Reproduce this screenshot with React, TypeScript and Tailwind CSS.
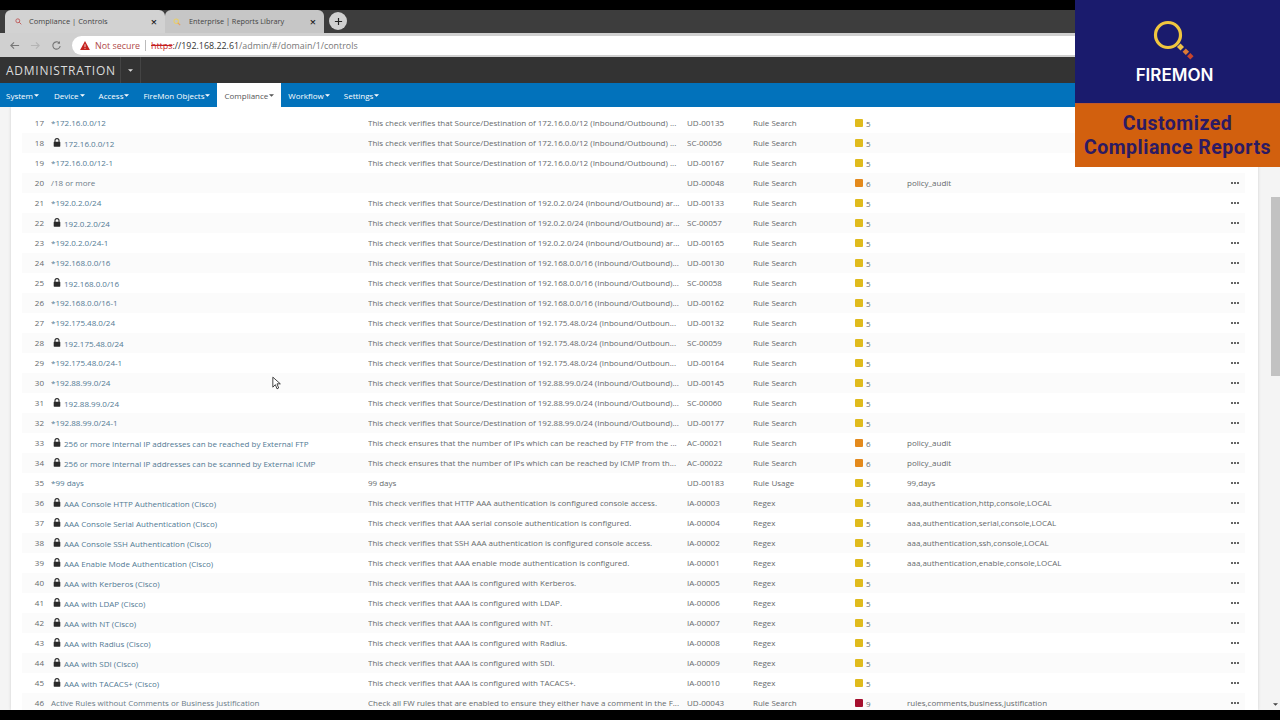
import React from "react";

type Row = { n: number; lock?: boolean; name: string; desc: string; id: string; type: string; sev: number; tags?: string };

const src = (ip: string, tail: string) => `This check verifies that Source/Destination of ${ip} (Inbound/Outbound)${tail}`;

const rows: Row[] = [
  { n: 17, name: "*172.16.0.0/12", desc: src("172.16.0.0/12", " ..."), id: "UD-00135", type: "Rule Search", sev: 5 },
  { n: 18, lock: true, name: "172.16.0.0/12", desc: src("172.16.0.0/12", " ..."), id: "SC-00056", type: "Rule Search", sev: 5 },
  { n: 19, name: "*172.16.0.0/12-1", desc: src("172.16.0.0/12", " ..."), id: "UD-00167", type: "Rule Search", sev: 5 },
  { n: 20, name: "/18 or more", desc: "", id: "UD-00048", type: "Rule Search", sev: 6, tags: "policy_audit" },
  { n: 21, name: "*192.0.2.0/24", desc: src("192.0.2.0/24", " ar..."), id: "UD-00133", type: "Rule Search", sev: 5 },
  { n: 22, lock: true, name: "192.0.2.0/24", desc: src("192.0.2.0/24", " ar..."), id: "SC-00057", type: "Rule Search", sev: 5 },
  { n: 23, name: "*192.0.2.0/24-1", desc: src("192.0.2.0/24", " ar..."), id: "UD-00165", type: "Rule Search", sev: 5 },
  { n: 24, name: "*192.168.0.0/16", desc: src("192.168.0.0/16", "..."), id: "UD-00130", type: "Rule Search", sev: 5 },
  { n: 25, lock: true, name: "192.168.0.0/16", desc: src("192.168.0.0/16", "..."), id: "SC-00058", type: "Rule Search", sev: 5 },
  { n: 26, name: "*192.168.0.0/16-1", desc: src("192.168.0.0/16", "..."), id: "UD-00162", type: "Rule Search", sev: 5 },
  { n: 27, name: "*192.175.48.0/24", desc: "This check verifies that Source/Destination of 192.175.48.0/24 (Inbound/Outboun...", id: "UD-00132", type: "Rule Search", sev: 5 },
  { n: 28, lock: true, name: "192.175.48.0/24", desc: "This check verifies that Source/Destination of 192.175.48.0/24 (Inbound/Outboun...", id: "SC-00059", type: "Rule Search", sev: 5 },
  { n: 29, name: "*192.175.48.0/24-1", desc: "This check verifies that Source/Destination of 192.175.48.0/24 (Inbound/Outboun...", id: "UD-00164", type: "Rule Search", sev: 5 },
  { n: 30, name: "*192.88.99.0/24", desc: src("192.88.99.0/24", "..."), id: "UD-00145", type: "Rule Search", sev: 5 },
  { n: 31, lock: true, name: "192.88.99.0/24", desc: src("192.88.99.0/24", "..."), id: "SC-00060", type: "Rule Search", sev: 5 },
  { n: 32, name: "*192.88.99.0/24-1", desc: src("192.88.99.0/24", "..."), id: "UD-00177", type: "Rule Search", sev: 5 },
  { n: 33, lock: true, name: "256 or more Internal IP addresses can be reached by External FTP", desc: "This check ensures that the number of IPs which can be reached by FTP from the ...", id: "AC-00021", type: "Rule Search", sev: 6, tags: "policy_audit" },
  { n: 34, lock: true, name: "256 or more Internal IP addresses can be scanned by External ICMP", desc: "This check ensures that the number of IPs which can be reached by ICMP from th...", id: "AC-00022", type: "Rule Search", sev: 6, tags: "policy_audit" },
  { n: 35, name: "*99 days", desc: "99 days", id: "UD-00183", type: "Rule Usage", sev: 5, tags: "99,days" },
  { n: 36, lock: true, name: "AAA Console HTTP Authentication (Cisco)", desc: "This check verifies that HTTP AAA authentication is configured console access.", id: "IA-00003", type: "Regex", sev: 5, tags: "aaa,authentication,http,console,LOCAL" },
  { n: 37, lock: true, name: "AAA Console Serial Authentication (Cisco)", desc: "This check verifies that AAA serial console authentication is configured.", id: "IA-00004", type: "Regex", sev: 5, tags: "aaa,authentication,serial,console,LOCAL" },
  { n: 38, lock: true, name: "AAA Console SSH Authentication (Cisco)", desc: "This check verifies that SSH AAA authentication is configured console access.", id: "IA-00002", type: "Regex", sev: 5, tags: "aaa,authentication,ssh,console,LOCAL" },
  { n: 39, lock: true, name: "AAA Enable Mode Authentication (Cisco)", desc: "This check verifies that AAA enable mode authentication is configured.", id: "IA-00001", type: "Regex", sev: 5, tags: "aaa,authentication,enable,console,LOCAL" },
  { n: 40, lock: true, name: "AAA with Kerberos (Cisco)", desc: "This check verifies that AAA is configured with Kerberos.", id: "IA-00005", type: "Regex", sev: 5 },
  { n: 41, lock: true, name: "AAA with LDAP (Cisco)", desc: "This check verifies that AAA is configured with LDAP.", id: "IA-00006", type: "Regex", sev: 5 },
  { n: 42, lock: true, name: "AAA with NT (Cisco)", desc: "This check verifies that AAA is configured with NT.", id: "IA-00007", type: "Regex", sev: 5 },
  { n: 43, lock: true, name: "AAA with Radius (Cisco)", desc: "This check verifies that AAA is configured with Radius.", id: "IA-00008", type: "Regex", sev: 5 },
  { n: 44, lock: true, name: "AAA with SDI (Cisco)", desc: "This check verifies that AAA is configured with SDI.", id: "IA-00009", type: "Regex", sev: 5 },
  { n: 45, lock: true, name: "AAA with TACACS+ (Cisco)", desc: "This check verifies that AAA is configured with TACACS+.", id: "IA-00010", type: "Regex", sev: 5 },
  { n: 46, name: "Active Rules without Comments or Business Justification", desc: "Check all FW rules that are enabled to ensure they either have a comment in the F...", id: "UD-00043", type: "Rule Search", sev: 9, tags: "rules,comments,business,justification" },
];

const Caret = ({ className = "" }: { className?: string }) => (
  <svg viewBox="0 0 6 3" className={`inline-block w-[5px] h-[3px] ${className}`}>
    <path d="M0 0h6L3 3z" fill="currentColor" />
  </svg>
);

const Lock = () => (
  <svg viewBox="0 0 8 9" className="w-[8px] h-[9px] shrink-0 -mt-[1px] text-[#2b2b2b]">
    <path d="M2 4V2.6a2 2 0 0 1 4 0V4" fill="none" stroke="currentColor" strokeWidth="1.1" />
    <rect x="0.7" y="3.8" width="6.6" height="4.9" rx="0.6" fill="currentColor" />
  </svg>
);

const Dots = () => (
  <div className="flex gap-[1px] items-center">
    <span className="w-[2px] h-[2px] rounded-full bg-[#333]" />
    <span className="w-[2px] h-[2px] rounded-full bg-[#333]" />
    <span className="w-[2px] h-[2px] rounded-full bg-[#333]" />
  </div>
);

const TableRow = ({ r, i }: { r: Row; i: number }) => {
  const sevColor = r.sev === 5 ? "bg-[#e0bb1d]" : r.sev === 6 ? "bg-[#e48a1c]" : "bg-[#a50f2d]";
  return (
    <div className={`flex h-[20px] shrink-0 items-center whitespace-nowrap text-[8px] text-[#666a6c] ${i % 2 === 1 ? "bg-[#fbfbfb]" : ""}`}>
      <div className="w-[22px] text-right shrink-0">{r.n}</div>
      <div className="w-[324px] pl-[7px] shrink-0 flex items-center text-[#527a94] overflow-hidden">
        {r.lock ? (
          <>
            <span className="ml-[2px] mr-[3px] flex"><Lock /></span>
            <span className="mt-[1px]">{r.name}</span>
          </>
        ) : (
          <span className={r.n === 20 || r.n === 46 ? "text-[#6b7c88]" : ""}>{r.name}</span>
        )}
      </div>
      <div className="w-[319px] shrink-0 overflow-hidden">{r.desc}</div>
      <div className="w-[66px] shrink-0">{r.id}</div>
      <div className="w-[102px] shrink-0">{r.type}</div>
      <div className="w-[52px] shrink-0 flex items-center">
        <span className={`w-[8px] h-[8px] -mt-[1px] rounded-[1px] ${sevColor}`} />
        <span className="ml-[3px] mt-[1px]">{r.sev}</span>
      </div>
      <div className="flex-1 min-w-0">{r.tags}</div>
      <div className="w-[14px] shrink-0 flex -mt-[1px]"><Dots /></div>
    </div>
  );
};

const nav = ["System", "Device", "Access", "FireMon Objects", "Compliance", "Workflow", "Settings"];

export default function App() {
  return (
    <div className="relative w-[1280px] h-[720px] overflow-hidden bg-black flex flex-col font-['Open_Sans',sans-serif]">
      {/* black letterbox top */}
      <div className="h-[10px] shrink-0 bg-black" />

      {/* tab strip */}
      <div className="h-[23px] shrink-0 bg-[#3d3d3d] flex items-end pl-[5px]">
        <div className="w-[160px] h-[23px] bg-[#d2d2d2] rounded-t-[6px] flex items-center pl-[10px] pr-[8px] text-[7.5px] text-[#444]">
          <svg viewBox="0 0 10 10" className="w-[7px] h-[7px] mr-[7px] text-[#c06060]">
            <circle cx="4" cy="4" r="2.8" fill="none" stroke="currentColor" strokeWidth="1.4" />
            <path d="M6 6l3 3" stroke="currentColor" strokeWidth="1.4" />
          </svg>
          <span className="flex-1">Compliance | Controls</span>
          <span className="text-[#222] text-[11px] font-semibold leading-none">×</span>
        </div>
        <div className="w-[159px] h-[23px] bg-[#c6c6c6] rounded-t-[6px] flex items-center pl-[8px] pr-[8px] text-[7.3px] text-[#444]">
          <svg viewBox="0 0 10 10" className="w-[8px] h-[8px] mr-[8px] text-[#e8cf6a]">
            <circle cx="4" cy="4" r="2.8" fill="none" stroke="currentColor" strokeWidth="1.4" />
            <path d="M6 6l3 3" stroke="#e8a060" strokeWidth="1.4" />
          </svg>
          <span className="flex-1">Enterprise | Reports Library</span>
          <span className="text-[#222] text-[11px] font-semibold leading-none">×</span>
        </div>
        <div className="ml-[5px] mb-[3px] w-[18px] h-[18px] rounded-full bg-[#d0d0d0] flex items-center justify-center">
          <svg viewBox="0 0 10 10" className="w-[9px] h-[9px] text-[#222]">
            <path d="M5 1v8M1 5h8" stroke="currentColor" strokeWidth="1.3" />
          </svg>
        </div>
      </div>

      {/* address bar */}
      <div className="h-[24px] shrink-0 bg-[#d0d0d0] flex items-center pl-[9px]">
        <svg viewBox="0 0 12 12" className="w-[11px] h-[11px] text-[#777]">
          <path d="M11 6H2M5.5 2.5L2 6l3.5 3.5" fill="none" stroke="currentColor" strokeWidth="1.2" />
        </svg>
        <svg viewBox="0 0 12 12" className="w-[11px] h-[11px] ml-[10px] text-[#b4b4b4]">
          <path d="M1 6h9M6.5 2.5L10 6 6.5 9.5" fill="none" stroke="currentColor" strokeWidth="1.2" />
        </svg>
        <svg viewBox="0 0 12 12" className="w-[11px] h-[11px] ml-[10px] text-[#777]">
          <path d="M10 6.5A4 4 0 1 1 9 3.3" fill="none" stroke="currentColor" strokeWidth="1.2" />
          <path d="M9.8 1v3H6.8z" fill="currentColor" />
        </svg>
        <div className="ml-[10px] flex-1 h-[19px] bg-white rounded-l-full flex items-center pl-[8px] pt-[1px] text-[8.9px]">
          <svg viewBox="0 0 12 11" className="w-[10px] h-[9px] text-[#c5221f]">
            <path d="M6 0l6 11H0z" fill="currentColor" />
            <path d="M6 4v3.5M6 8.5v1" stroke="#fff" strokeWidth="1" />
          </svg>
          <span className="ml-[5px] text-[#b04a48]">Not secure</span>
          <span className="mx-[5px] w-[1px] h-[11px] bg-[#bbb]" />
          <span className="text-[#c5221f] line-through">https</span>
          <span className="text-[#333]">://192.168.22.61</span>
          <span className="text-[#777]">/admin/#/domain/1/controls</span>
        </div>
      </div>

      {/* admin bar */}
      <div className="h-[26px] shrink-0 bg-[#333333] flex items-stretch">
        <div className="w-[121px] pl-[6px] pt-[1px] flex items-center text-[12px] tracking-[0.75px] text-[#dcdcdc] border-r border-[#444]">ADMINISTRATION</div>
        <div className="w-[20px] flex items-center justify-center text-[#ddd] border-r border-[#444]"><Caret /></div>
      </div>

      {/* nav */}
      <div className="h-[24px] shrink-0 bg-[#0272bb] flex items-stretch pl-[6px] text-[8px] text-white">
        {nav.map((n) => {
          const active = n === "Compliance";
          const cls = active
            ? "bg-white text-[#555] px-[7px] ml-[-7px] mr-[7px]"
            : "mr-[14px] first:mr-[15px] last:mr-0";
          return (
            <div key={n} className={`flex items-center pt-[1px] ${cls}`}>
              {n}
              <Caret className="ml-[1px]" />
            </div>
          );
        })}
      </div>

      {/* content */}
      <div className="h-[603px] shrink-0 bg-[#f4f4f4] flex overflow-hidden">
        <div className="ml-[11px] w-[1247px] h-full bg-white shadow-[0_0_3px_rgba(0,0,0,0.15)] pt-[6px] pl-[11px] pr-[13px] flex flex-col overflow-hidden">
          {rows.map((r, i) => (
            <TableRow key={r.n} r={r} i={i} />
          ))}
        </div>
        <div className="ml-[12px] w-[10px] h-full pt-[90px] pb-[4px] flex flex-col items-center justify-between">
          <div className="w-[9px] h-[179px] bg-[#c2c2c2]" />
          <Caret className="text-[#444]" />
        </div>
      </div>

      {/* black letterbox bottom */}
      <div className="h-[10px] shrink-0 bg-black" />

      {/* brand overlay */}
      <div className="absolute top-0 right-0 w-[205px] h-[167px] flex flex-col">
        <div className="h-[103px] bg-[#1a1b6d] flex flex-col items-center">
          <svg viewBox="0 0 50 44" className="w-[50px] h-[44px] mt-[18px] ml-[-3px]">
            <circle cx="17" cy="17" r="12.5" fill="none" stroke="#f0c63f" strokeWidth="3.2" />
            <rect x="27" y="26.5" width="5" height="5" fill="#efc24a" transform="rotate(45 29.5 29)" />
            <rect x="32.5" y="31.5" width="4.6" height="4.6" fill="#dd7b35" transform="rotate(45 34.8 33.8)" />
            <rect x="37" y="36" width="4.6" height="4.6" fill="#c8452c" transform="rotate(45 39.3 38.3)" />
          </svg>
          <div className="mt-[3px] ml-[-6px] text-[17px] font-semibold text-white leading-[20px] font-['Inter',sans-serif]">FIREMON</div>
        </div>
        <div className="h-[64px] bg-[#d2600e] border-t border-[#c0582a] flex flex-col items-center justify-center text-[19.5px] font-bold leading-[24px] tracking-[0.5px] text-[#2c1a63] font-['Roboto',sans-serif]">
          <span>Customized</span>
          <span>Compliance Reports</span>
        </div>
      </div>

      {/* mouse cursor */}
      <svg viewBox="0 0 12 16" className="absolute left-[272px] top-[376px] w-[10px] h-[14px]">
        <path d="M1 1v12l3-3 2 5 2-1-2-5h4z" fill="#fff" stroke="#222" strokeWidth="1" />
      </svg>
    </div>
  );
}
